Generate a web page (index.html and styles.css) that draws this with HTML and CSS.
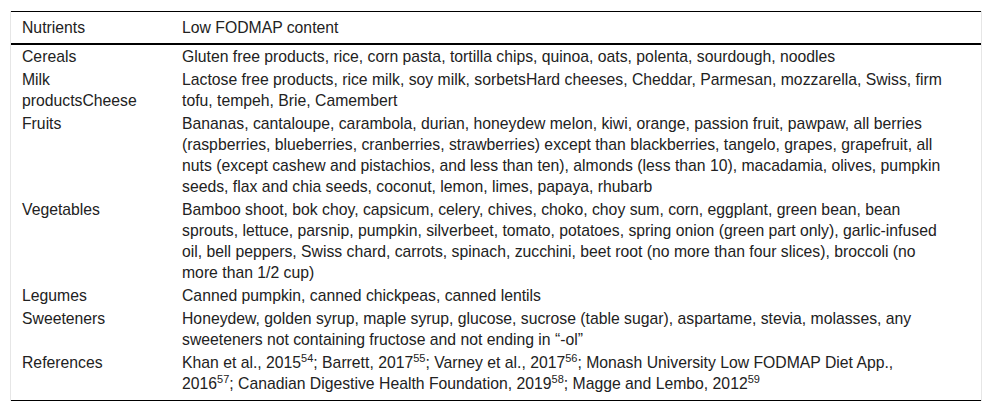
FILE: index.html
```html
<!DOCTYPE html>
<html>
<head>
<meta charset="utf-8">
<link rel="stylesheet" href="styles.css">
</head>
<body>
<div class="wrap">
<table class="tbl">
<thead>
<tr><th class="c1">Nutrients</th><th>Low FODMAP content</th></tr>
</thead>
<tbody>
<tr><td class="c1">Cereals</td><td>Gluten free products, rice, corn pasta, tortilla chips, quinoa, oats, polenta, sourdough, noodles</td></tr>
<tr><td class="c1">Milk<br>productsCheese</td><td>Lactose free products, rice milk, soy milk, sorbetsHard cheeses, Cheddar, Parmesan, mozzarella, Swiss, firm<br>tofu, tempeh, Brie, Camembert</td></tr>
<tr><td class="c1">Fruits</td><td>Bananas, cantaloupe, carambola, durian, honeydew melon, kiwi, orange, passion fruit, pawpaw, all berries<br>(raspberries, blueberries, cranberries, strawberries) except than blackberries, tangelo, grapes, grapefruit, all<br>nuts (except cashew and pistachios, and less than ten), almonds (less than 10), macadamia, olives, pumpkin<br>seeds, flax and chia seeds, coconut, lemon, limes, papaya, rhubarb</td></tr>
<tr><td class="c1">Vegetables</td><td>Bamboo shoot, bok choy, capsicum, celery, chives, choko, choy sum, corn, eggplant, green bean, bean<br>sprouts, lettuce, parsnip, pumpkin, silverbeet, tomato, potatoes, spring onion (green part only), garlic-infused<br>oil, bell peppers, Swiss chard, carrots, spinach, zucchini, beet root (no more than four slices), broccoli (no<br>more than 1/2 cup)</td></tr>
<tr><td class="c1">Legumes</td><td>Canned pumpkin, canned chickpeas, canned lentils</td></tr>
<tr><td class="c1">Sweeteners</td><td>Honeydew, golden syrup, maple syrup, glucose, sucrose (table sugar), aspartame, stevia, molasses, any<br>sweeteners not containing fructose and not ending in “-ol”</td></tr>
<tr class="last"><td class="c1">References</td><td>Khan et al., 2015<sup>54</sup>; Barrett, 2017<sup>55</sup>; Varney et al., 2017<sup>56</sup>; Monash University Low FODMAP Diet App.,<br>2016<sup>57</sup>; Canadian Digestive Health Foundation, 2019<sup>58</sup>; Magge and Lembo, 2012<sup>59</sup></td></tr>
</tbody>
</table>
</div>
</body>
</html>
```
FILE: styles.css
```css
html, body {
  margin: 0;
  padding: 0;
  background: #fff;
}
.wrap {
  margin: 11px 10px 0 10px;
  border-left: 1px solid #e6e6e6;
  border-right: 1px solid #e6e6e6;
}
.tbl {
  width: 100%;
  border-collapse: collapse;
  font-family: "Liberation Sans", Arial, sans-serif;
  font-size: 15.75px;
  line-height: 21px;
  color: #222;
  border-top: 1px solid #000;
  border-bottom: 1px solid #000;
}
.tbl th {
  font-weight: normal;
  text-align: left;
  padding: 5px 11px 5px 11px;
  border-bottom: 2px solid #000;
}
.tbl td {
  vertical-align: top;
  padding: 1px 11px 1px 11px;
  white-space: nowrap;
}
.tbl .last td {
  padding-bottom: 6px;
}
.tbl .c1 {
  width: 138px;
}
.tbl sup {
  font-size: 11px;
  line-height: 0;
  vertical-align: 6px;
}
```
